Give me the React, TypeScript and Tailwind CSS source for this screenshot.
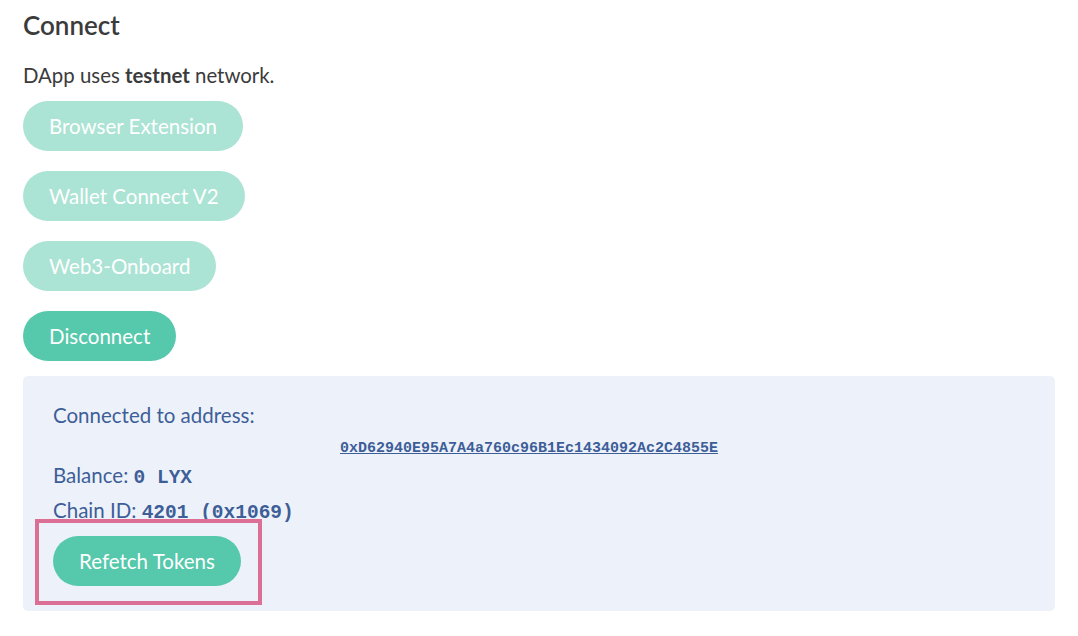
export default function App() {
  const disabledBtn =
    'h-[50px] rounded-full bg-[#abe3d4] px-[26px] text-[20.5px] text-white self-start';
  const activeBtn =
    'h-[50px] rounded-full bg-[#56c8ab] px-[26px] text-[20.5px] text-white self-start';

  return (
    <div className="min-h-[636px] bg-white px-[23px] pt-[8px] font-['Lato',sans-serif]">
      <h2 className="text-[26px] font-semibold leading-[34px] text-[#3b3b3b]">Connect</h2>

      <p className="mt-[20px] text-[20.4px] leading-[26px] text-[#3b3b3b]">
        DApp uses <b>testnet</b> network.
      </p>

      <div className="mt-[13px] flex flex-col gap-[20px]">
        <button className={disabledBtn}>Browser Extension</button>
        <button className={disabledBtn}>Wallet Connect V2</button>
        <button className={disabledBtn}>Web3-Onboard</button>
        <button className={activeBtn}>Disconnect</button>
      </div>

      <div className="relative mt-[15px] rounded-[5px] bg-[#edf2fa] px-[30px] pb-[25px] pt-[27px] text-[#3e5e98]">
        <p className="text-[20.5px] leading-[24px]">Connected to address:</p>
        <p className="mt-[12px] pl-[287px] font-['Liberation_Mono',monospace] text-[15px] font-bold leading-[20px]">
          <a className="underline" href="#">
            0xD62940E95A7A4a760c96B1Ec1434092Ac2C4855E
          </a>
        </p>
        <p className="mt-[3px] text-[20.5px] leading-[26px]">
          Balance: <span className="font-['Liberation_Mono',monospace] text-[19.5px] font-bold">0 LYX</span>
        </p>
        <p className="mt-[6px] text-[20.5px] leading-[26px]">
          Chain ID:{' '}
          <span className="font-['Liberation_Mono',monospace] text-[19.5px] font-bold">4201 (0x1069)</span>
        </p>
        <div className="mt-[10px]">
          <button className={activeBtn}>Refetch Tokens</button>
        </div>
        <div className="pointer-events-none absolute left-[12px] top-[143px] h-[86px] w-[227px] border-4 border-[#db6f96]" />
      </div>
    </div>
  );
}
